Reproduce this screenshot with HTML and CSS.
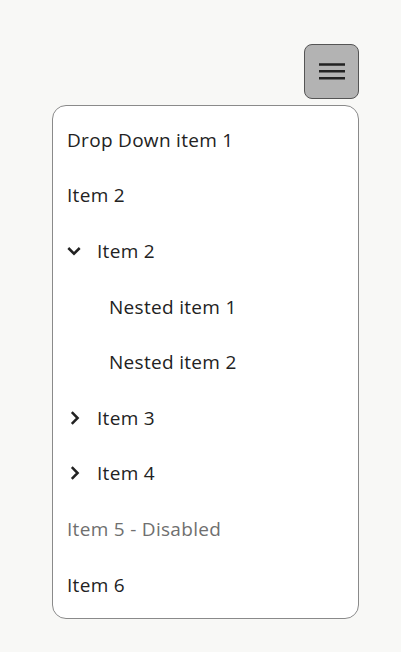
FILE: index.html
```html
<!DOCTYPE html>
<html>
<head>
<meta charset="utf-8">
<link rel="stylesheet" href="styles.css">
</head>
<body>
<div class="wrap">
  <div class="bar">
    <button class="toggle" aria-label="Menu">
      <svg width="26" height="17" viewBox="0 0 26 17"><path d="M0 1.5h26M0 8.3h26M0 15.3h26" stroke="#222" stroke-width="2.6"/></svg>
    </button>
  </div>
  <ul class="menu">
    <li class="item">Drop Down item 1</li>
    <li class="item">Item 2</li>
    <li class="item has-icon"><svg class="chev" width="14" height="14" viewBox="0 0 14 14"><path d="M1.3 4l5.7 5.7 5.7-5.7" fill="none" stroke="#222" stroke-width="2.5"/></svg>Item 2</li>
    <li class="item nested">Nested item 1</li>
    <li class="item nested">Nested item 2</li>
    <li class="item has-icon"><svg class="chev" width="14" height="14" viewBox="0 0 14 14"><path d="M4.8 1.2l5.8 5.8-5.8 5.8" fill="none" stroke="#222" stroke-width="2.5"/></svg>Item 3</li>
    <li class="item has-icon"><svg class="chev" width="14" height="14" viewBox="0 0 14 14"><path d="M4.8 1.2l5.8 5.8-5.8 5.8" fill="none" stroke="#222" stroke-width="2.5"/></svg>Item 4</li>
    <li class="item disabled">Item 5 - Disabled</li>
    <li class="item">Item 6</li>
  </ul>
</div>
</body>
</html>
```
FILE: styles.css
```css
html, body {
  margin: 0;
  padding: 0;
  background: #f8f8f6;
}
body {
  font-family: "Open Sans", "Noto Sans", sans-serif;
  color: #222;
}
.wrap {
  width: 307px;
  margin-left: 52px;
  padding-top: 44px;
}
.bar {
  display: flex;
  justify-content: flex-end;
}
.toggle {
  width: 55px;
  height: 55px;
  box-sizing: border-box;
  background: #b3b3b3;
  border: 1px solid #555;
  border-radius: 8px;
  display: flex;
  align-items: center;
  justify-content: center;
  padding: 0;
}
.menu {
  list-style: none;
  margin: 6px 0 0;
  padding: 6px 0;
  background: #fff;
  border: 1px solid #8a8a8a;
  border-radius: 14px;
}
.item {
  height: 55.6px;
  display: flex;
  align-items: center;
  padding-left: 14px;
  font-size: 19px;
  letter-spacing: 0.3px;
  color: #222;
}
.chev {
  margin-right: 16px;
}
.nested {
  padding-left: 56px;
}
.disabled {
  color: #6f6f6f;
}
```
